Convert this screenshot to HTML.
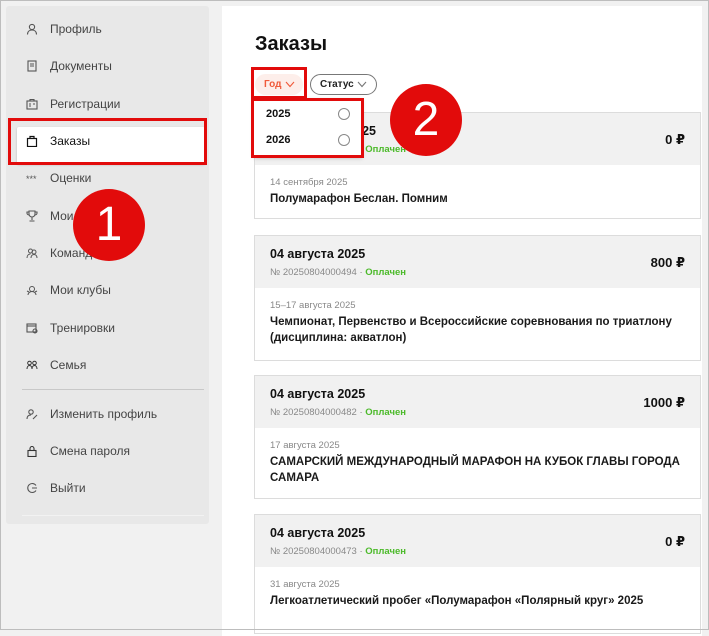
<!DOCTYPE html>
<html><head><meta charset="utf-8"><style>
*{margin:0;padding:0;box-sizing:border-box}
body{width:709px;height:630px;overflow:hidden;background:#f1f1f1;font-family:"Liberation Sans","DejaVu Sans",sans-serif;position:relative;color:#111}
.frame{position:absolute;left:0;top:0;width:709px;height:630px;border:1px solid #bdbdbd;z-index:50;pointer-events:none}
.side{position:absolute;left:6px;top:6px;width:203px;height:518px;background:#e8e8e8;border-radius:3px}
.it{position:absolute;left:0;width:203px;height:20px;font-size:12px;color:#444;line-height:20px}
.it span{position:absolute;left:44px}
.it svg{position:absolute;left:20px;top:4px}
.act{position:absolute;left:11px;top:121px;width:188px;height:37px;background:#fff;border-radius:2px;box-shadow:0 1px 2px rgba(0,0,0,.2)}
.sep{position:absolute;left:16px;width:182px;height:1px;background:#c8c8c8}
.main{position:absolute;left:222px;top:6px;width:480px;height:630px;background:#fff}
h1{position:absolute;left:255px;top:33px;font-size:20px;font-weight:bold;color:#111}
.pill{position:absolute;top:74px;height:21px;border-radius:11px;font-size:10px;line-height:21px;font-weight:bold}
.pill svg{position:absolute;top:7px}
.card{position:absolute;left:254px;width:447px;border:1px solid #dcdcdc;background:#fff}
.hd{background:#f1f1f1;height:52px;position:relative}
.hd .t{position:absolute;left:15px;top:11px;font-size:12.5px;font-weight:bold;color:#111}
.hd .n{position:absolute;left:15px;top:31px;font-size:9.5px;color:#888}
.hd .n b{color:#4cba2a;font-weight:bold}
.hd .p{position:absolute;right:15px;top:19px;font-size:13px;font-weight:bold}
.bd{padding:12px 15px 0;position:relative}
.bd .d{font-size:9.5px;color:#888}
.bd .x{font-size:11.5px;font-weight:bold;color:#1a1a1a;line-height:16px;margin-top:3px}
.red{position:absolute;border:3px solid #e20b0b;z-index:20}
.num{position:absolute;width:72px;height:72px;border-radius:50%;background:#e20b0b;color:#fff;font-size:48px;text-align:center;line-height:72px;z-index:21}
</style></head><body>
<div class="side">
<div class="act"></div>
<div class="it" style="top:13px"><svg width="12" height="12" viewBox="0 0 12 12" fill="none" stroke="#555" stroke-width="1.1"><circle cx="6" cy="4" r="2.6"/><path d="M1.5 11.5c0-3 2-4.5 4.5-4.5s4.5 1.5 4.5 4.5"/></svg><span>Профиль</span></div>
<div class="it" style="top:50px"><svg width="12" height="12" viewBox="0 0 12 12" fill="none" stroke="#555" stroke-width="1.1"><rect x="2" y="1" width="8" height="10"/><path d="M4 4h4M4 6h4"/></svg><span>Документы</span></div>
<div class="it" style="top:88px"><svg width="12" height="12" viewBox="0 0 12 12" fill="none" stroke="#555" stroke-width="1.1"><rect x="1" y="3" width="10" height="8"/><path d="M4 3V1.5h4V3M3 6h2M3 8h2M7 6h2"/></svg><span>Регистрации</span></div>
<div class="it" style="top:125px;color:#111"><svg width="12" height="12" viewBox="0 0 12 12" fill="none" stroke="#111" stroke-width="1.2"><rect x="1.5" y="3.5" width="9" height="8"/><path d="M4 3.5V1.5h4v2"/></svg><span>Заказы</span></div>
<div class="it" style="top:162px"><svg width="12" height="12" viewBox="0 0 12 12" fill="#555"><text x="0" y="10" font-size="9">***</text></svg><span>Оценки</span></div>
<div class="it" style="top:200px"><svg width="12" height="12" viewBox="0 0 12 12" fill="none" stroke="#555" stroke-width="1.1"><path d="M3 1h6v3a3 3 0 0 1-6 0zM6 7v3M3.5 11h5M3 2H1v1a2 2 0 0 0 2 2M9 2h2v1a2 2 0 0 1-2 2"/></svg><span>Мои награды</span></div>
<div class="it" style="top:237px"><svg width="12" height="12" viewBox="0 0 12 12" fill="none" stroke="#555" stroke-width="1"><circle cx="4.5" cy="4" r="2"/><circle cx="8" cy="5" r="2"/><path d="M1 11c0-2.5 1.5-4 3.5-4M5 11c0-2 1.2-3.5 3-3.5s3 1.5 3 3.5"/></svg><span>Команды</span></div>
<div class="it" style="top:274px"><svg width="12" height="12" viewBox="0 0 12 12" fill="none" stroke="#555" stroke-width="1"><circle cx="6" cy="5" r="2.5"/><path d="M2 11c0-2 2-3.5 4-3.5s4 1.5 4 3.5M1 7l2 1M11 7l-2 1"/></svg><span>Мои клубы</span></div>
<div class="it" style="top:312px"><svg width="12" height="12" viewBox="0 0 12 12" fill="none" stroke="#555" stroke-width="1.1"><rect x="1" y="2" width="9" height="8"/><path d="M1 4h9"/><circle cx="9" cy="9" r="2"/></svg><span>Тренировки</span></div>
<div class="it" style="top:349px"><svg width="12" height="12" viewBox="0 0 12 12" fill="none" stroke="#333" stroke-width="1"><circle cx="3.5" cy="4" r="1.8"/><circle cx="8.5" cy="4" r="1.8"/><path d="M1 10c0-2 1-3.5 2.5-3.5S6 8 6 10M6 10c0-2 1-3.5 2.5-3.5S11 8 11 10"/></svg><span>Семья</span></div>
<div class="sep" style="top:383px"></div>
<div class="it" style="top:398px"><svg width="12" height="12" viewBox="0 0 12 12" fill="none" stroke="#555" stroke-width="1.1"><circle cx="5" cy="4" r="2.2"/><path d="M1 11c0-2.5 1.5-4 4-4M7 11l4-4"/></svg><span>Изменить профиль</span></div>
<div class="it" style="top:435px"><svg width="12" height="12" viewBox="0 0 12 12" fill="none" stroke="#333" stroke-width="1.1"><rect x="2" y="5.5" width="8" height="6"/><path d="M4 5.5V3.5a2 2 0 0 1 4 0v2"/></svg><span>Смена пароля</span></div>
<div class="it" style="top:472px"><svg width="12" height="12" viewBox="0 0 12 12" fill="none" stroke="#555" stroke-width="1.1"><path d="M10 3.5A4.5 4.5 0 1 0 10 8.5M6 6h5"/></svg><span>Выйти</span></div>
<div class="sep" style="top:509px;background:#f2f2f2"></div>
</div>
<div class="main"></div>
<h1>Заказы</h1>
<div class="pill" style="left:255px;width:48px;background:#fdeeea;color:#f05a3a;padding-left:9px">Год<svg style="left:30px" width="10" height="7" viewBox="0 0 10 7" fill="none" stroke="#f05a3a" stroke-width="1.1"><path d="M1 1l4 4.5 4-4.5"/></svg></div>
<div class="pill" style="left:310px;width:67px;border:1px solid #777;color:#222;padding-left:9px;line-height:19px">Статус<svg style="left:46px;top:6px" width="10" height="7" viewBox="0 0 10 7" fill="none" stroke="#777" stroke-width="1.1"><path d="M1 1l4 4.5 4-4.5"/></svg></div>

<div class="card" style="top:112px;height:107px"><div class="hd"><div class="t">14 сентября 2025</div><div class="n">№ 20250914000101 · <b>Оплачен</b></div><div class="p">0 ₽</div></div>
<div class="bd"><div class="d">14 сентября 2025</div><div class="x">Полумарафон Беслан. Помним</div></div></div>
<div style="position:absolute;left:254px;top:99px;width:108px;height:58px;background:#fff;box-shadow:0 1px 4px rgba(0,0,0,.25);z-index:10;font-size:11px;font-weight:bold">
<div style="position:absolute;left:12px;top:9px">2025</div><div style="position:absolute;left:84px;top:9px;width:12px;height:12px;border:1px solid #888;border-radius:50%"></div>
<div style="position:absolute;left:12px;top:35px">2026</div><div style="position:absolute;left:84px;top:35px;width:12px;height:12px;border:1px solid #888;border-radius:50%"></div></div>

<div class="card" style="top:235px;height:126px"><div class="hd"><div class="t">04 августа 2025</div><div class="n">№ 20250804000494 · <b>Оплачен</b></div><div class="p">800 ₽</div></div>
<div class="bd"><div class="d">15–17 августа 2025</div><div class="x">Чемпионат, Первенство и Всероссийские соревнования по триатлону (дисциплина: акватлон)</div></div></div>
<div class="card" style="top:375px;height:124px"><div class="hd"><div class="t">04 августа 2025</div><div class="n">№ 20250804000482 · <b>Оплачен</b></div><div class="p">1000 ₽</div></div>
<div class="bd"><div class="d">17 августа 2025</div><div class="x">САМАРСКИЙ МЕЖДУНАРОДНЫЙ МАРАФОН НА КУБОК ГЛАВЫ ГОРОДА САМАРА</div></div></div>
<div class="card" style="top:514px;height:120px"><div class="hd"><div class="t">04 августа 2025</div><div class="n">№ 20250804000473 · <b>Оплачен</b></div><div class="p">0 ₽</div></div>
<div class="bd"><div class="d">31 августа 2025</div><div class="x">Легкоатлетический пробег «Полумарафон «Полярный круг» 2025</div></div></div>

<div class="red" style="left:8px;top:118px;width:199px;height:47px"></div>
<div class="red" style="left:251px;top:67px;width:56px;height:32px"></div>
<div class="red" style="left:251px;top:98px;width:113px;height:60px"></div>
<div class="num" style="left:73px;top:189px">1</div>
<div class="num" style="left:390px;top:84px">2</div>
<div class="frame"></div>
</body></html>
